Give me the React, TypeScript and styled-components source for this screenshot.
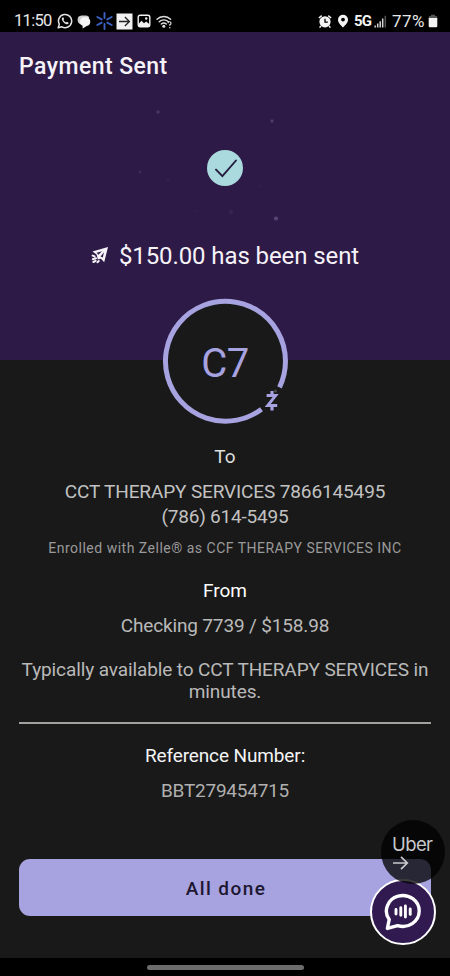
import type { ReactNode } from 'react';
import styled, { createGlobalStyle } from 'styled-components';

const colors = {
  purple: '#2e1a47',
  dark: '#191919',
  lavender: '#a7a2e0',
  mint: '#aadadd',
  white: '#f6f3f8',
  grey: '#c2c2c2',
};

const sparks = [
  { x: 158, y: 80, r: 1.8, o: 0.2 },
  { x: 272, y: 89, r: 1.8, o: 0.22 },
  { x: 276, y: 186.5, r: 2.1, o: 0.3 },
  { x: 140, y: 140, r: 1.4, o: 0.14 },
  { x: 168, y: 148, r: 2, o: 0.05 },
  { x: 231, y: 180, r: 2.2, o: 0.07 },
  { x: 197, y: 179, r: 1.5, o: 0.04 },
  { x: 261, y: 154, r: 1.5, o: 0.04 },
];

type IconProps = { width: number; height: number; gap?: number; children: ReactNode };

const Icon = ({ width, height, gap = 0, children }: IconProps) => (
  <IconSvg width={width} height={height} viewBox={`0 0 ${width} ${height}`} $gap={gap}>
    {children}
  </IconSvg>
);

const StatusIcons = () => (
  <StatusBar>
    <StatusText $width={43} $size={16.5} $spacing={-0.7}>11:50</StatusText>
    {/* whatsapp */}
    <Icon width={16} height={16}>
      <path d="M1.2 14.8 L2.3 11.2 A6.6 6.6 0 1 1 4.9 13.8 Z" fill="none" stroke="#e4e4e4" strokeWidth="1.5" strokeLinejoin="round" />
      <path d="M5.6 4.4 C4.2 5.2 4.7 7.2 6.5 9.2 C8.5 11.4 10.6 12 11.5 10.5 C11.8 9.8 11.5 9.5 10.9 9.2 L9.8 8.7 L9 9.6 C7.9 9.1 7 8.2 6.4 7.1 L7.1 6.2 L6.7 5 C6.4 4.4 6.1 4.2 5.6 4.4 Z" fill="#e4e4e4" />
    </Icon>
    {/* messages */}
    <Icon width={15} height={15} gap={4}>
      <path d="M4.6 1.4 H9 A4 4 0 0 1 12.4 3.4 L4 10.4 A4.6 4.6 0 0 1 .6 6 A4.4 4.4 0 0 1 4.6 1.4 Z" fill="#cfcfcf" />
      <path d="M6.4 3.2 H9.6 A4.5 4.5 0 0 1 9.8 12 L5.6 14.4 V11.8 A4.6 4.6 0 0 1 6.4 3.2 Z" fill="#f5f5f5" />
    </Icon>
    {/* spark */}
    <Icon width={17} height={18} gap={4}>
      <path d="M8.5 1 V6 M8.5 12 V17 M1.3 5 L5.7 7.4 M11.3 10.6 L15.7 13 M15.7 5 L11.3 7.4 M5.7 10.6 L1.3 13" stroke="#3d62c4" strokeWidth="1.9" strokeLinecap="round" />
    </Icon>
    <Icon width={17} height={17} gap={3}>
      <path d="M.5 .5 H16.5 V16.5 H.5 Z" fill="#f1f1f1" />
      <path d="M3 8.5 H13.4 M8.9 4 L13.4 8.5 L8.9 13" fill="none" stroke="#222" strokeWidth="1.3" />
    </Icon>
    {/* gallery */}
    <Icon width={14} height={14} gap={4}>
      <rect x="1.2" y="1.2" width="11.6" height="11.6" rx="2" fill="none" stroke="#f1f1f1" strokeWidth="1.4" />
      <path d="M1.5 10 L4.5 6.8 L7 9.2 L9.2 7.4 L12.5 10.3 V12.4 H1.5 Z" fill="#f1f1f1" />
      <circle cx="9.2" cy="4.5" r="1.2" fill="#f1f1f1" />
    </Icon>
    {/* wifi */}
    <Icon width={17} height={15} gap={5}>
      <path d="M1 5.3 A9.5 9.5 0 0 1 14.6 5.3 M3.2 7.8 A6.5 6.5 0 0 1 12.4 7.8 M5.3 10.1 A3.6 3.6 0 0 1 10.3 10.1" fill="none" stroke="#dedede" strokeWidth="1.4" strokeLinecap="round" />
      <circle cx="7.8" cy="12.2" r="1.5" fill="#dedede" />
      <path d="M12 9.2 A1.5 1.5 0 1 1 13.8 10.7 V11.8 M13.8 13.1 V14.3" fill="none" stroke="#dedede" strokeWidth="1.2" />
    </Icon>
    <Spacer />
    {/* alarm */}
    <Icon width={14} height={15}>
      <circle cx="7" cy="7.8" r="5.6" fill="#f4f4f4" />
      <path d="M.9 4 L3.7 1.6 M13.1 4 L10.3 1.6 M2.9 12 L1.6 13.6 M11.1 12 L12.4 13.6" stroke="#f4f4f4" strokeWidth="1.5" />
      <path d="M7 4.7 V8.1 H9.8" fill="none" stroke="#000" strokeWidth="1.3" />
    </Icon>
    {/* location */}
    <Icon width={12} height={14} gap={5}>
      <path d="M6 .8 A5 5 0 0 1 11 5.8 C11 9 8 11.5 6 13.5 C4 11.5 1 9 1 5.8 A5 5 0 0 1 6 .8 Z" fill="#f4f4f4" />
      <circle cx="6" cy="5.6" r="1.9" fill="#000" />
    </Icon>
    <NetworkText>5G</NetworkText>
    {/* signal */}
    <Icon width={13} height={13}>
      <path d="M1.2 10.6 V12.5 M3.7 8.6 V12.5 M6.2 6.2 V12.5 M8.7 3.6 V12.5" stroke="#d6d6d6" strokeWidth="1.5" />
      <path d="M11.3 .8 V12.5" stroke="#555" strokeWidth="1.5" />
    </Icon>
    <StatusText $width={36} $left={5} $size={17} $spacing={0.5}>77%</StatusText>
    {/* battery */}
    <Icon width={10} height={14}>
      <path d="M3 .7 H7 V2 H8 Q9.3 2 9.3 3.3 V4.5 H.7 V3.3 Q.7 2 2 2 H3 Z" fill="#555" />
      <path d="M.7 4 H9.3 V12 Q9.3 13.3 8 13.3 H2 Q.7 13.3 .7 12 Z" fill="#f4f4f4" />
    </Icon>
  </StatusBar>
);

const App = () => {
  return (
    <>
      <GlobalStyle />
      <Screen>
        <StatusIcons />
        <Hero>
          <Sparks viewBox="0 0 450 328">
            {sparks.map((s) => (
              <circle key={`${s.x}-${s.y}`} cx={s.x} cy={s.y} r={s.r} fill="#b9a6d8" opacity={s.o} />
            ))}
          </Sparks>
          <Title>Payment Sent</Title>
          <CheckCircle>
            <svg width="36" height="36" viewBox="0 0 36 36">
              <path d="M9 19.6 L15.4 26.2 L29 10.5" fill="none" stroke="#241b3d" strokeWidth="1.9" strokeLinecap="round" />
            </svg>
          </CheckCircle>
          <SentRow>
            <svg width="18" height="18" viewBox="0 0 18 18">
              <path d="M1.4 4.4 L17 0 L13.2 15.2 L9.9 11.8 L6.8 12.6 L5.6 7.6 Z" fill={colors.white} />
              <path d="M5.6 5.7 L11 4.3 L7.4 7.8 Z M13 5.2 L11.8 10.4 L9.6 9.4 Z" fill={colors.purple} />
              <path d="M1.6 8.6 L3.6 9.4 M1.8 12.2 L5 11.2 M2.4 15 L4.6 13.8 M6.4 15.2 L7.8 14" stroke={colors.white} strokeWidth="2" strokeLinecap="round" />
            </svg>
            <SentText>$150.00 has been sent</SentText>
          </SentRow>
        </Hero>
        <Details>
          <Avatar>
            <AvatarRing viewBox="0 0 126 126">
              <circle cx="63.4" cy="63.3" r="60" fill={colors.dark} />
              <path d="M99.5 111.2 A60 60 0 1 1 117.5 89.3" fill="none" stroke={colors.lavender} strokeWidth="5" />
              <circle cx="113.5" cy="93" r="1.5" fill="#4a4a4a" />
              <path d="M104.6 97.6 H113.6 L105.8 107.4 H115.2" fill="none" stroke={colors.lavender} strokeWidth="3" />
              <path d="M110 93 V97 M110 108 V112.4" stroke={colors.lavender} strokeWidth="3.2" />
            </AvatarRing>
            <Initials>C7</Initials>
          </Avatar>
          <Line $top={20} $color="#dedede">To</Line>
          <Line $top={10} $spacing={-0.13}>CCT THERAPY SERVICES 7866145495</Line>
          <Line $top={0} $spacing={-0.2}>(786) 614-5495</Line>
          <Line $top={7} $size={14} $spacing={0.5} $color="#9a9a9a">
            Enrolled with Zelle® as CCF THERAPY SERVICES INC
          </Line>
          <Line $top={17} $color="#fff">From</Line>
          <Line $top={10} $spacing={-0.16} $color="#b9b9b9">Checking 7739 / $158.98</Line>
          <Line $top={21} $height={22} $spacing={-0.11} $color="#b9b9b9">
            Typically available to CCT THERAPY SERVICES in
            <br />
            minutes.
          </Line>
          <Divider />
          <Line $top={19} $spacing={-0.12} $color="#f4f4f4">Reference Number:</Line>
          <Line $top={10} $spacing={-0.24} $color="#b0b0b0">BBT279454715</Line>
          <DoneButton>All done</DoneButton>
        </Details>
        <NavBar>
          <NavHandle />
        </NavBar>
        <ChatBubble>
          <svg width="40" height="40" viewBox="0 0 40 40">
            <path d="M4.4 36.4 L6.2 27.6 A16.4 15.4 0 1 1 14.6 33.6 Z" fill="none" stroke="#fff" strokeWidth="3.4" strokeLinejoin="round" />
            <path d="M13 17.4 V22 M17.8 15.8 V23.2 M22.4 14 V25 M27.2 17 V22.4" stroke="#fff" strokeWidth="2.9" strokeLinecap="round" />
          </svg>
        </ChatBubble>
        <UberBubble>
          <UberText>Uber</UberText>
          <svg width="17" height="16" viewBox="0 0 17 16">
            <path d="M1 8 H15.3 M9 1.8 L15.3 8 L9 14.2" fill="none" stroke="#c9c9cc" strokeWidth="1.7" />
          </svg>
        </UberBubble>
      </Screen>
    </>
  );
};

const GlobalStyle = createGlobalStyle`
  body {
    margin: 0;
    background: #000;
    font-family: Roboto, sans-serif;
  }

  * {
    box-sizing: border-box;
  }
`;

const Screen = styled.div`
  position: relative;
  display: flex;
  flex-direction: column;
  width: 450px;
  height: 976px;
  overflow: hidden;
  background: #000;
`;

const StatusBar = styled.div`
  display: flex;
  align-items: center;
  height: 32px;
  padding: 10px 12px 0 14px;
`;

const IconSvg = styled.svg<{ $gap: number }>`
  flex: none;
  margin-left: ${({ $gap }) => $gap}px;
`;

const StatusText = styled.span<{
  $width: number;
  $left?: number;
  $size: number;
  $spacing: number;
}>`
  flex: none;
  width: ${({ $width }) => $width}px;
  margin-left: ${({ $left }) => $left ?? 0}px;
  color: #e8e8e8;
  font-size: ${({ $size }) => $size}px;
  line-height: 20px;
  letter-spacing: ${({ $spacing }) => $spacing}px;
  white-space: nowrap;
`;

const NetworkText = styled.span`
  width: 20px;
  margin-left: 5px;
  color: #f4f4f4;
  font-size: 15px;
  font-weight: 700;
  line-height: 20px;
  letter-spacing: -0.8px;
`;

const Spacer = styled.div`
  flex: 1;
`;

const Hero = styled.div`
  position: relative;
  display: flex;
  flex-direction: column;
  align-items: center;
  height: 328px;
  background: ${colors.purple};
`;

const Sparks = styled.svg`
  position: absolute;
  inset: 0;
  width: 450px;
  height: 328px;
`;

const Title = styled.h1`
  align-self: flex-start;
  margin: 20px 0 0 19px;
  color: ${colors.white};
  font-size: 23px;
  font-weight: 500;
  line-height: 30px;
  letter-spacing: 0.45px;
`;

const CheckCircle = styled.div`
  width: 36px;
  height: 36px;
  margin-top: 68px;
  border-radius: 50%;
  background: ${colors.mint};
`;

const SentRow = styled.div`
  display: flex;
  align-items: center;
  gap: 10px;
  margin-top: 54px;
`;

const SentText = styled.span`
  padding-top: 1px;
  color: ${colors.white};
  font-size: 24px;
  line-height: 30px;
  letter-spacing: -0.1px;
  white-space: nowrap;
`;

const Details = styled.div`
  display: flex;
  flex-direction: column;
  align-items: center;
  height: 598px;
  padding: 0 19px;
  background: ${colors.dark};
`;

const Avatar = styled.div`
  position: relative;
  display: flex;
  flex: none;
  align-items: center;
  justify-content: center;
  width: 126px;
  height: 126px;
  margin-top: -62px;
`;

const AvatarRing = styled.svg`
  position: absolute;
  inset: 0;
`;

const Initials = styled.span`
  position: relative;
  padding-top: 6px;
  color: ${colors.lavender};
  font-size: 40px;
  line-height: 48px;
  letter-spacing: -0.5px;
`;

const Line = styled.p<{
  $top: number;
  $size?: number;
  $height?: number;
  $spacing?: number;
  $color?: string;
}>`
  margin: ${({ $top }) => $top}px 0 0;
  color: ${({ $color }) => $color ?? colors.grey};
  font-size: ${({ $size }) => $size ?? 19}px;
  line-height: ${({ $height }) => $height ?? 25}px;
  letter-spacing: ${({ $spacing }) => $spacing ?? 0}px;
  text-align: center;
  white-space: nowrap;
`;

const Divider = styled.div`
  flex: none;
  width: 412px;
  height: 2px;
  margin-top: 19px;
  background: #a3a19e;
`;

const DoneButton = styled.button`
  flex: none;
  width: 412px;
  height: 57px;
  margin-top: 56px;
  padding: 1px 0 0 2px;
  border: none;
  border-radius: 11px;
  background: ${colors.lavender};
  color: #1d1730;
  font-family: inherit;
  font-size: 19px;
  font-weight: 500;
  letter-spacing: 1.4px;
`;

const NavBar = styled.div`
  display: flex;
  justify-content: center;
  height: 18px;
  padding-top: 7px;
`;

const NavHandle = styled.div`
  width: 157px;
  height: 5px;
  border-radius: 3px;
  background: #6c6c6c;
`;

const ChatBubble = styled.div`
  position: absolute;
  top: 879px;
  left: 370px;
  display: flex;
  align-items: center;
  justify-content: center;
  width: 66px;
  height: 66px;
  border: 2px solid #fff;
  border-radius: 50%;
  background: #311a50;
`;

const UberBubble = styled.div`
  position: absolute;
  top: 820px;
  left: 381px;
  display: flex;
  flex-direction: column;
  align-items: flex-start;
  width: 64px;
  height: 64px;
  padding: 14px 0 0 11px;
  border-radius: 50%;
  background: rgba(0, 0, 0, 0.76);
`;

const UberText = styled.span`
  color: #c9c9cc;
  font-family: Inter, sans-serif;
  font-size: 18.5px;
  line-height: 21px;
  letter-spacing: -0.6px;
`;

export default App;
